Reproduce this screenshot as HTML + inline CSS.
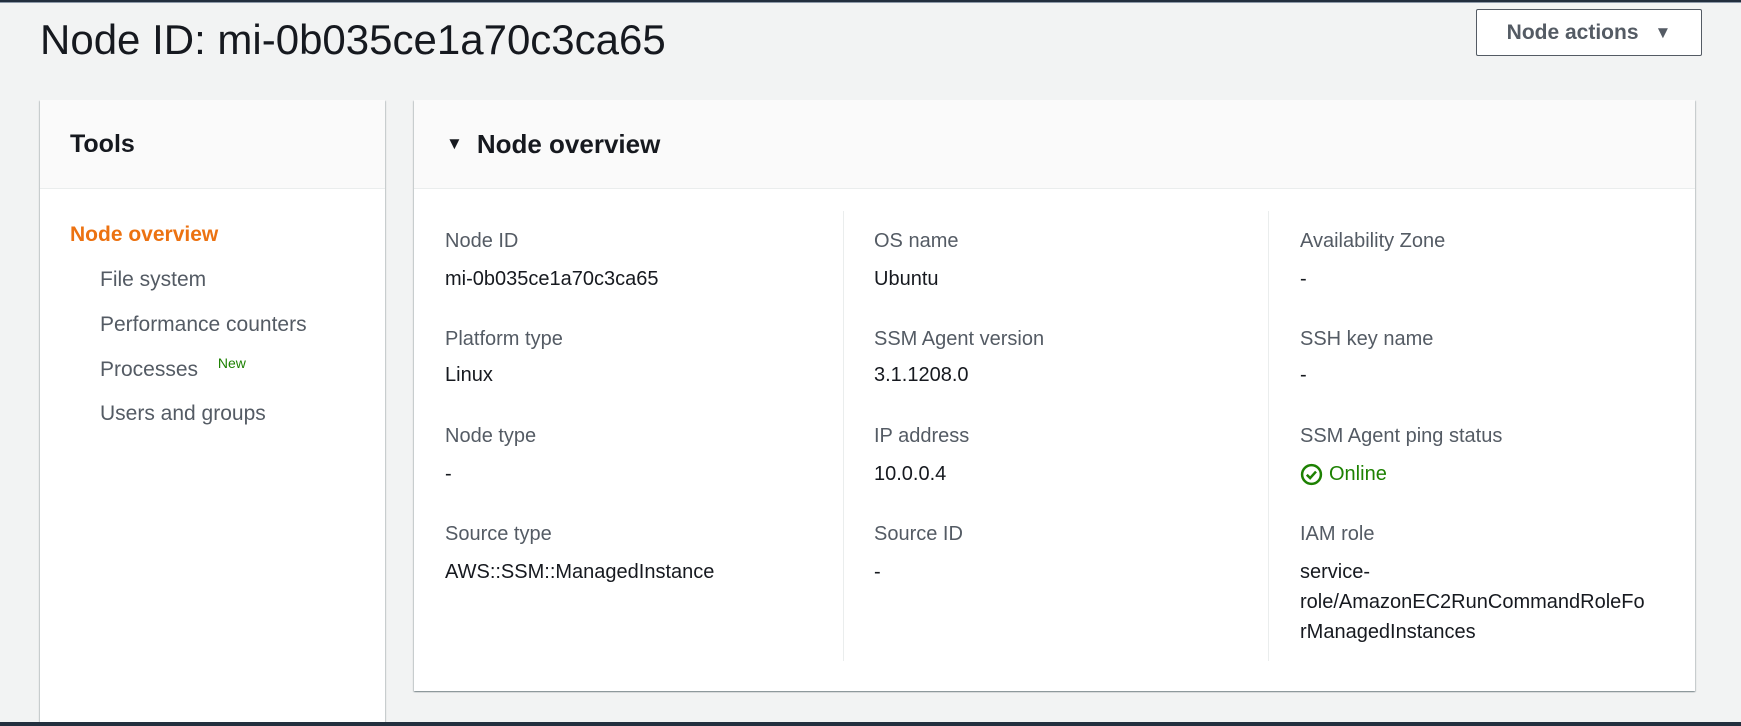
<!DOCTYPE html>
<html><head><meta charset="utf-8"><style>
*{margin:0;padding:0;box-sizing:border-box}
body{width:1741px;height:726px;background:#f2f3f3;font-family:"Liberation Sans",sans-serif;color:#16191f;position:relative;overflow:hidden}
.topbar{position:absolute;left:0;top:0;width:1741px;height:3px;background:#232f3e;border-bottom:1px solid #8d99a8}
.bot{position:absolute;left:0;top:722px;width:1741px;height:4px;background:#232f3e}
h1{position:absolute;left:40px;top:16px;font-size:42px;font-weight:400;color:#16191f}
.btn{position:absolute;left:1476px;top:9px;width:226px;height:47px;border:1px solid #545b64;border-radius:2px;background:#fff;font-weight:700;font-size:21px;color:#545b64;display:flex;align-items:center;justify-content:center;gap:16px}
.panel{position:absolute;background:#fff;box-shadow:0 1px 1px 0 rgba(0,28,36,.3),1px 1px 1px 0 rgba(0,28,36,.15),-1px 1px 1px 0 rgba(0,28,36,.15)}
.ph{height:89px;background:#fafafa;border-bottom:1px solid #eaeded;display:flex;align-items:center;font-weight:700;font-size:26px}
.nav{position:absolute;font-size:21px;color:#545b64}
.lbl{position:absolute;font-size:20px;color:#545b64}
.val{position:absolute;font-size:20px;color:#16191f;line-height:30px;white-space:nowrap}
.div{position:absolute;top:211px;height:450px;width:1px;background:#eaeded}
</style></head><body>
<div class="topbar"></div>
<h1>Node ID: mi-0b035ce1a70c3ca65</h1>
<div class="btn">Node actions <span style="font-size:17px">▼</span></div>

<div class="panel" style="left:40px;top:100px;width:345px;height:622px">
<div class="ph" style="padding-left:30px;font-size:25px">Tools</div>
</div>
<div class="nav" style="left:70px;top:223px;color:#ec7211;font-weight:700">Node overview</div>
<div class="nav" style="left:100px;top:268px">File system</div>
<div class="nav" style="left:100px;top:313px">Performance counters</div>
<div class="nav" style="left:100px;top:358px">Processes <span style="font-size:14px;color:#1d8102;position:relative;top:-8px;margin-left:14px">New</span></div>
<div class="nav" style="left:100px;top:402px">Users and groups</div>

<div class="panel" style="left:414px;top:100px;width:1281px;height:591px">
<div class="ph" style="padding-left:32px"><span style="font-size:17px;margin-right:14px">▼</span>Node overview</div>
</div>
<div class="div" style="left:843px"></div>
<div class="div" style="left:1268px"></div>

<div class="lbl" style="left:445px;top:230px">Node ID</div>
<div class="val" style="left:445px;top:264px">mi-0b035ce1a70c3ca65</div>
<div class="lbl" style="left:445px;top:328px">Platform type</div>
<div class="val" style="left:445px;top:360px">Linux</div>
<div class="lbl" style="left:445px;top:425px">Node type</div>
<div class="val" style="left:445px;top:459px">-</div>
<div class="lbl" style="left:445px;top:523px">Source type</div>
<div class="val" style="left:445px;top:557px">AWS::SSM::ManagedInstance</div>

<div class="lbl" style="left:874px;top:230px">OS name</div>
<div class="val" style="left:874px;top:264px">Ubuntu</div>
<div class="lbl" style="left:874px;top:328px">SSM Agent version</div>
<div class="val" style="left:874px;top:360px">3.1.1208.0</div>
<div class="lbl" style="left:874px;top:425px">IP address</div>
<div class="val" style="left:874px;top:459px">10.0.0.4</div>
<div class="lbl" style="left:874px;top:523px">Source ID</div>
<div class="val" style="left:874px;top:557px">-</div>

<div class="lbl" style="left:1300px;top:230px">Availability Zone</div>
<div class="val" style="left:1300px;top:264px">-</div>
<div class="lbl" style="left:1300px;top:328px">SSH key name</div>
<div class="val" style="left:1300px;top:360px">-</div>
<div class="lbl" style="left:1300px;top:425px">SSM Agent ping status</div>
<div class="val" style="left:1300px;top:459px;color:#1d8102;display:flex;align-items:center;gap:6px"><svg width="23" height="23" viewBox="0 0 22 22"><circle cx="11" cy="11" r="9" fill="none" stroke="#1d8102" stroke-width="2.4"/><path d="M6.5 11.2l3.2 3.2 5.6-6.2" fill="none" stroke="#1d8102" stroke-width="2.4"/></svg>Online</div>
<div class="lbl" style="left:1300px;top:523px">IAM role</div>
<div class="val" style="left:1300px;top:557px">service-<br>role/AmazonEC2RunCommandRoleFo<br>rManagedInstances</div>
<div class="bot"></div>
</body></html>
